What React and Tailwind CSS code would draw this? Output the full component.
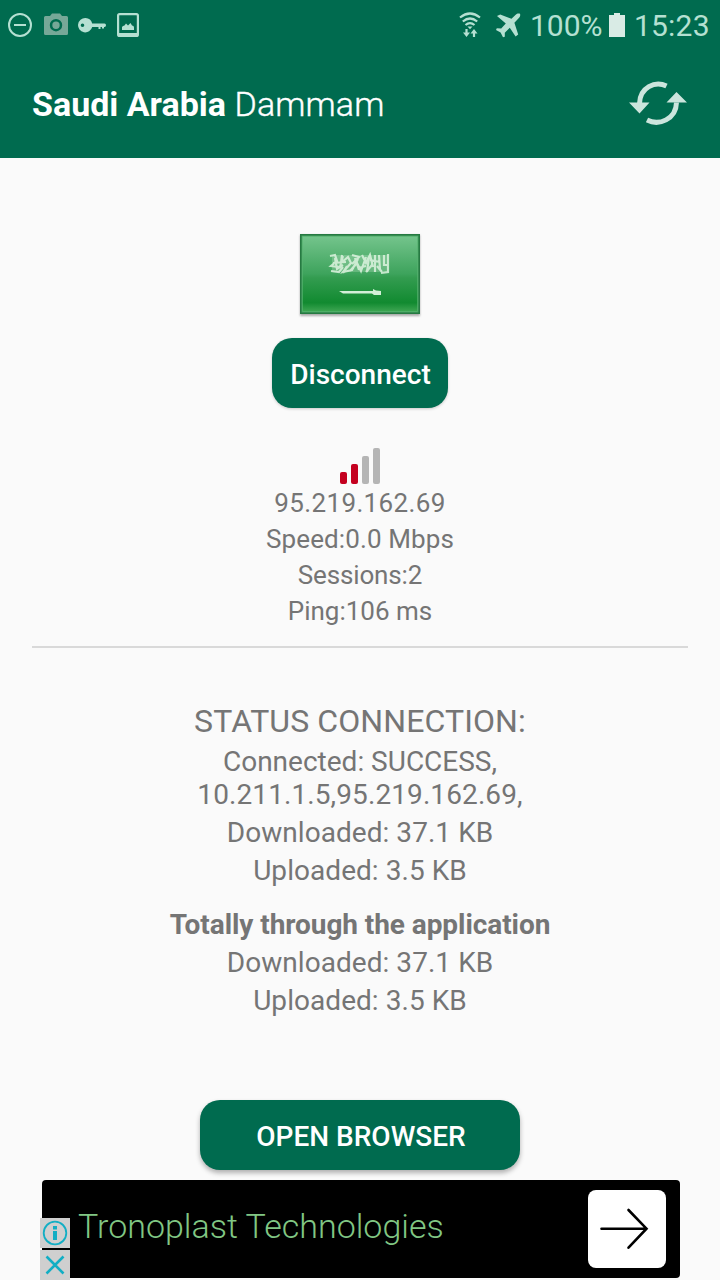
import React from 'react'

const StatusBar = () => (
  <div className="h-[50px] flex items-center justify-between pl-2 pr-[10px] text-[#b5e0d2]">
    <div className="flex items-center gap-3">
      <svg width="24" height="24" viewBox="0 0 24 24" fill="none" stroke="currentColor" strokeWidth="2">
        <circle cx="12" cy="12" r="11" />
        <path d="M6 12h12" />
      </svg>
      <svg width="24" height="24" viewBox="0 0 24 24" className="text-[#76a898]">
        <path fill="currentColor" fillRule="evenodd" d="M8 0.500h8L18 3h4.500q1.500 0 1.500 1.500v16q0 1.500-1.500 1.500h-21Q0 22 0 20.500v-16Q0 3 1.500 3H6zM12 6a6.200 6.200 0 1 0 0 12.400A6.200 6.200 0 0 0 12 6zm0 2.500a3.700 3.700 0 1 1 0 7.400 3.700 3.700 0 0 1 0-7.400z" />
      </svg>
      <svg width="28" height="24" viewBox="0 0 28 24" className="-ml-[2px]">
        <path fill="currentColor" fillRule="evenodd" d="M7.500 5a7 7 0 0 1 6.700 5.500H26.500q1.500 0 1.500 1.700t-1.500 1.800H26v1.500h-2V14h-1.500v2h-2v-2h-6.300A7.200 7.200 0 1 1 7.500 5zM4.500 10.500a1.800 1.800 0 1 0 0 3.600 1.800 1.800 0 0 0 0-3.600z" />
      </svg>
      <svg width="22" height="24" viewBox="0 0 22 24" className="-ml-[1px]">
        <rect x="1.100" y="1.100" width="19.800" height="21.800" rx="1.500" fill="none" stroke="currentColor" strokeWidth="2.200" />
        <path d="M2 20h18v3H2z" fill="currentColor" />
        <path d="M5 17v-3l1-1 1.500-.5 1.500-2 2 2 2.500-2.500 1.500 2.500 1.500.5.500 1.500V17z" fill="currentColor" />
      </svg>
    </div>
    <div className="flex items-center">
      <svg width="22" height="26" viewBox="0 0 22 26" fill="none" stroke="currentColor" strokeWidth="2.200" className="-translate-x-px">
        <path d="M1 5.500q10-8 20 0M3.800 9.500q7.200-6 14.400 0M6.500 13q4.500-3.700 9 0" />
        <path d="M8.500 14.500h5L11 17.200z" fill="currentColor" stroke="none" />
        <path d="M7.500 17v5M15 25v-5" />
        <path d="M4 20.500h7L7.500 25zM11.500 21.500h7L15 17z" fill="currentColor" stroke="none" />
      </svg>
      <svg width="25" height="25" viewBox="0 0 25 25" className="ml-[14px]">
        <path fill="currentColor" d="M24 .8c-1.800-.7-3.200 0-4.300 1l-4.200 4L4.200 1.500 1 3l8.800 7.600-4.600 5L.8 15.300 0 17l4.600 2.600L7 24.300l1.800-.6v-4l5-5 5.800 8.900 2.600-2.200-3.800-11.700 4-4.200C23.700 4.300 24.700 2.700 24 .8z" />
      </svg>
      <span className="ml-[9px] w-[74px] whitespace-nowrap text-[30px] leading-[50px] translate-y-px">100%</span>
      <svg width="16" height="24" viewBox="0 0 16 24" className="ml-[5px] text-[#d9ebe5]">
        <path d="M5 0h6v2h5v22H0V2h5z" fill="currentColor" />
      </svg>
      <span className="ml-[9px] w-[76px] whitespace-nowrap text-[30px] leading-[50px] tracking-[0.2px] translate-y-px">15:23</span>
    </div>
  </div>
)

const RefreshIcon = () => (
  <svg width="60" height="46" viewBox="0 0 60 46" className="text-[#cce5dd]">
    <g fill="none" stroke="currentColor" strokeWidth="5">
      <path d="M38.500 5C27-.5 12 6.500 11.500 22.500" />
      <path d="M19 39C31 45 48 38.500 48.500 21.500" />
    </g>
    <path d="M1 21.500h20.500L11.500 32.500zM38.500 21.500H59L48.500 11z" fill="currentColor" />
  </svg>
)

const Flag = () => (
  <svg width="124" height="86" viewBox="0 0 124 86" className="block">
    <defs>
      <linearGradient id="flag" x1="0" y1="0" x2="0" y2="1">
        <stop offset="0" stopColor="#74c48c" />
        <stop offset="0.500" stopColor="#3da35c" />
        <stop offset="0.550" stopColor="#339c50" />
        <stop offset="0.880" stopColor="#118a30" />
        <stop offset="1" stopColor="#3fa653" />
      </linearGradient>
      <filter id="soft" x="-10%" y="-10%" width="120%" height="120%">
        <feGaussianBlur stdDeviation="1.200" />
      </filter>
      <filter id="script" x="-5%" y="-10%" width="110%" height="120%">
        <feGaussianBlur stdDeviation="0.700" />
      </filter>
    </defs>
    <rect x="2" y="3" width="120" height="81" fill="#888" opacity="0.700" filter="url(#soft)" />
    <rect x="2" y="2" width="120" height="80" fill="#267a42" />
    <rect x="4.250" y="4.250" width="115.500" height="75.500" fill="url(#flag)" stroke="#5fbd78" strokeOpacity="0.600" strokeWidth="1.500" />
    <g filter="url(#script)">
      <rect x="34" y="23" width="56" height="17" fill="#d3efd8" opacity="0.250" />
      <g fill="none" stroke="#dcf3df" strokeWidth="2.200" opacity="0.850">
        <path d="M32 24l5-1 2 6-6 5 9 1 3-11M33 39l8 1 4-5M44 23l-1 8 7-6 3 6-8 9 9-2 6-11M54 23l7 2-7 7M52 39l7-8 4 8 5-14M64 23l4 8 4-8 3 12M68 40l6-7M77 23v17M81 23l1 15M86 23v10h4M90 22v18l-7 1M60 36l8-2M35 31l13-1M72 28l10 2" />
        <path d="M37 26l2 11 6-4M49 34l-4 7M57 26l4 12M71 25l-2 15M79 34l5 6" />
      </g>
      <path d="M41 59h34v-2l3 1.500 5 .5v4h-7l-2-1.500H45z" fill="#d3efd8" />
    </g>
  </svg>
)

const bars = [
  { height: 'h-[12px]', color: 'bg-[#c4001f]' },
  { height: 'h-[20px]', color: 'bg-[#c4001f]' },
  { height: 'h-[28px]', color: 'bg-[#b5b5b5]' },
  { height: 'h-[36px]', color: 'bg-[#b5b5b5]' },
]

const Signal = () => (
  <div className="mt-[40px] h-[36px] w-[40px] flex items-end justify-between">
    {bars.map((bar) => (
      <div key={bar.height} className={`w-[6.5px] rounded-[2px] ${bar.height} ${bar.color}`} />
    ))}
  </div>
)

const AdBanner = () => (
  <div className="relative mt-[10px] ml-[42px] w-[638px] h-[98px] rounded-[4px] bg-black flex items-center justify-between pl-[36px] pr-[14px]">
    <span className="text-[34px] font-light text-[#81c784] whitespace-nowrap -mt-[6px]">Tronoplast Technologies</span>
    <div className="size-[78px] rounded-[8px] bg-white flex items-center justify-center">
      <svg width="78" height="78" viewBox="0 0 78 78" fill="none" stroke="#000" strokeWidth="2.600" strokeLinecap="round">
        <path d="M13.500 38.700h45M40.500 20l18 18.700-18 19" />
      </svg>
    </div>
    <div className="absolute -left-[2px] top-[38px] flex flex-col gap-[2px]">
      <div className="size-[30px] bg-[#cfcfcf]">
        <svg width="30" height="30" viewBox="0 0 30 30" fill="none" stroke="#12aec4">
          <circle cx="15" cy="15" r="11.300" strokeWidth="1.800" />
          <path d="M15 8v3.500M15 13v9" strokeWidth="4" />
        </svg>
      </div>
      <div className="size-[30px] bg-[#cfcfcf]">
        <svg width="30" height="30" viewBox="0 0 30 30" fill="none" stroke="#12aec4" strokeWidth="2.600">
          <path d="M6.500 6.500l17 17M23.500 6.500l-17 17" />
        </svg>
      </div>
    </div>
  </div>
)

const App = () => {
  return (
    <div className="w-[720px] h-[1280px] overflow-hidden bg-[#fafafa] font-[Roboto,sans-serif] text-[#757575]">
      <header className="h-[158px] bg-[#006b4f]">
        <StatusBar />
        <div className="h-[108px] flex items-center justify-between pl-8 pr-[32px]">
          <h1 className="text-[34px] text-white whitespace-nowrap">
            <span className="font-bold">Saudi Arabia</span>{' '}
            <span className="font-light tracking-[0.15px] [-webkit-text-stroke:0.4px_white]">Dammam</span>
          </h1>
          <RefreshIcon />
        </div>
      </header>

      <main className="flex flex-col items-center text-center">
        <div className="mt-[74px]">
          <Flag />
        </div>
        <button className="mt-[20px] w-[176px] h-[70px] pt-[4px] pl-px rounded-[20px] bg-[#006b4f] text-white text-[28px] font-medium shadow-[0_1px_3px_rgba(0,0,0,0.2)]">
          Disconnect
        </button>

        <Signal />
        <div className="mt-px text-[26px] leading-[36px]">
          <p className="tracking-[0.35px]">95.219.162.69</p>
          <p className="tracking-[0.1px]">Speed:0.0 Mbps</p>
          <p className="tracking-[-0.15px]">Sessions:2</p>
          <p>Ping:106 ms</p>
        </div>
        <div className="mt-[17px] w-[656px] h-[2px] bg-[#d9d9d9]" />

        <div className="mt-[52px] text-[28px] leading-[38px]">
          <h2 className="text-[32px] leading-[42px] tracking-[0.1px]">STATUS CONNECTION:</h2>
          <p className="mt-[3px] leading-[33px]">
            Connected: SUCCESS,
            <br />
            <span className="tracking-[0.1px]">10.211.1.5,95.219.162.69,</span>
          </p>
          <p className="mt-[3px] tracking-[0.05px]">Downloaded: 37.1 KB</p>
          <p className="tracking-[0.05px]">Uploaded: 3.5 KB</p>
          <p className="mt-4 font-bold tracking-[-0.07px]">Totally through the application</p>
          <p className="tracking-[0.05px]">Downloaded: 37.1 KB</p>
          <p className="tracking-[0.05px]">Uploaded: 3.5 KB</p>
        </div>

        <button className="mt-[80px] w-[320px] h-[70px] pt-[4px] pl-[2px] rounded-[20px] bg-[#006b4f] text-white text-[28px] font-medium shadow-[0_3px_5px_rgba(0,0,0,0.3)]">
          OPEN BROWSER
        </button>
      </main>

      <AdBanner />
    </div>
  )
}

export default App
